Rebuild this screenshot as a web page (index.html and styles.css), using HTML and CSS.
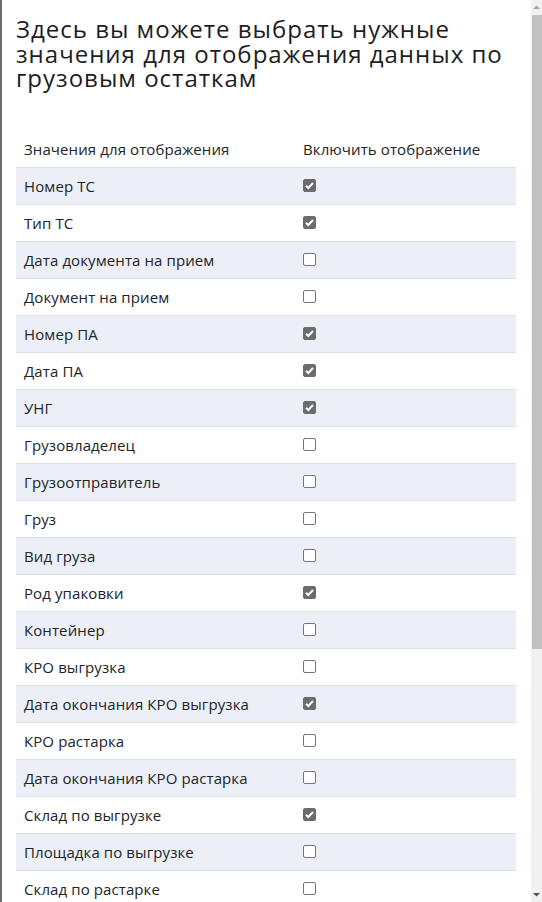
FILE: index.html
```html
<!DOCTYPE html>
<html lang="ru">
<head>
<meta charset="utf-8">
<title>Настройка отображения</title>
<link rel="stylesheet" href="styles.css">
</head>
<body>
<div class="edge"></div>
<div class="modal">
  <h2 class="title">Здесь вы можете выбрать нужные значения для отображения данных по грузовым остаткам</h2>
  <table class="fields">
    <thead>
      <tr><th class="col-name">Значения для отображения</th><th class="col-check">Включить отображение</th></tr>
    </thead>
    <tbody>
      <tr><td>Номер ТС</td><td><input type="checkbox" class="cb" checked></td></tr>
      <tr><td>Тип ТС</td><td><input type="checkbox" class="cb" checked></td></tr>
      <tr><td>Дата документа на прием</td><td><input type="checkbox" class="cb"></td></tr>
      <tr><td>Документ на прием</td><td><input type="checkbox" class="cb"></td></tr>
      <tr><td>Номер ПА</td><td><input type="checkbox" class="cb" checked></td></tr>
      <tr><td>Дата ПА</td><td><input type="checkbox" class="cb" checked></td></tr>
      <tr><td>УНГ</td><td><input type="checkbox" class="cb" checked></td></tr>
      <tr><td>Грузовладелец</td><td><input type="checkbox" class="cb"></td></tr>
      <tr><td>Грузоотправитель</td><td><input type="checkbox" class="cb"></td></tr>
      <tr><td>Груз</td><td><input type="checkbox" class="cb"></td></tr>
      <tr><td>Вид груза</td><td><input type="checkbox" class="cb"></td></tr>
      <tr><td>Род упаковки</td><td><input type="checkbox" class="cb" checked></td></tr>
      <tr><td>Контейнер</td><td><input type="checkbox" class="cb"></td></tr>
      <tr><td>КРО выгрузка</td><td><input type="checkbox" class="cb"></td></tr>
      <tr><td>Дата окончания КРО выгрузка</td><td><input type="checkbox" class="cb" checked></td></tr>
      <tr><td>КРО растарка</td><td><input type="checkbox" class="cb"></td></tr>
      <tr><td>Дата окончания КРО растарка</td><td><input type="checkbox" class="cb"></td></tr>
      <tr><td>Склад по выгрузке</td><td><input type="checkbox" class="cb" checked></td></tr>
      <tr><td>Площадка по выгрузке</td><td><input type="checkbox" class="cb"></td></tr>
      <tr><td>Склад по растарке</td><td><input type="checkbox" class="cb"></td></tr>
    </tbody>
  </table>
</div>
<div class="scrollbar" aria-hidden="true">
  <div class="sb-btn sb-up"><svg width="11" height="15" viewBox="0 0 11 15"><path d="M2 9 L5.5 5.5 L9 9 Z" fill="#a3a3a3"/></svg></div>
  <div class="sb-track"><div class="sb-thumb"></div></div>
  <div class="sb-btn sb-down"><svg width="11" height="15" viewBox="0 0 11 15"><path d="M2 6 L5.5 9.5 L9 6 Z" fill="#505050"/></svg></div>
</div>
</body>
</html>
```
FILE: styles.css
```css
html, body {
  margin: 0;
  height: 100%;
}
body {
  display: flex;
  overflow: hidden;
  background: #fff;
  font-family: "Open Sans", "Noto Sans", sans-serif;
  color: #212529;
}
.edge {
  width: 2px;
  flex: none;
  background: #6e6e6e;
}
.modal {
  flex: 1;
  min-width: 0;
  overflow: hidden;
  padding: 17px 15px 0 14px;
  box-sizing: border-box;
}
.scrollbar {
  width: 11px;
  flex: none;
  display: flex;
  flex-direction: column;
  background: #f1f1f1;
}
.sb-btn {
  height: 15px;
  flex: none;
}
.sb-btn svg {
  display: block;
}
.sb-track {
  flex: 1;
}
.sb-thumb {
  height: 634px;
  margin-left: 1px;
  background: #c1c1c1;
}
.title {
  margin: 0 0 39px;
  font-size: 24px;
  font-weight: 400;
  line-height: 24.5px;
  letter-spacing: 1px;
  color: #1d1d1f;
}
.fields {
  width: 500px;
  border-collapse: collapse;
  font-size: 15px;
  letter-spacing: 0.1px;
}
.fields th,
.fields td {
  padding: 8px 8px;
  line-height: 20px;
  text-align: left;
  vertical-align: middle;
}
.fields th {
  font-weight: 400;
  padding: 9px 8px 8px;
  border-bottom: 1px solid #dee2e6;
}
.fields td {
  border-top: 1px solid #dee2e6;
}
.col-name {
  width: 263px;
}
.fields tbody tr:nth-child(odd) {
  background: #ecf0f6;
}
.cb {
  appearance: none;
  -webkit-appearance: none;
  width: 13px;
  height: 13px;
  margin: 0;
  display: block;
  border: 1px solid #767676;
  border-radius: 2px;
  background: #fff;
  box-sizing: border-box;
}
.cb:checked {
  border-color: #6c6c6c;
  background: #6c6c6c url("data:image/svg+xml;utf8,<svg xmlns='http://www.w3.org/2000/svg' width='13' height='13'><path d='M3 6.8 L5.3 9 L10 4' fill='none' stroke='white' stroke-width='2'/></svg>") no-repeat center;
}
```
